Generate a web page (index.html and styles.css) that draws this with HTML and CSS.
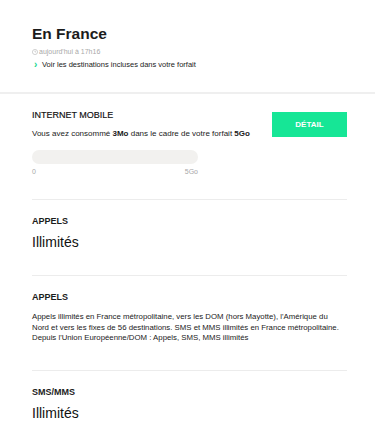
FILE: index.html
```html
<!DOCTYPE html>
<html lang="fr">
<head>
<meta charset="utf-8">
<title>En France</title>
<link rel="stylesheet" href="styles.css">
</head>
<body>
<header class="header">
  <h1 class="title">En France</h1>
  <div class="stamp">
    <svg class="clock" viewBox="0 0 10 10" width="6" height="6"><circle cx="5" cy="5" r="4.3" fill="none" stroke="#b5b5b5" stroke-width="1"/><path d="M5 2.6V5h1.8" fill="none" stroke="#b5b5b5" stroke-width="1"/></svg>
    <span>aujourd'hui à 17h16</span>
  </div>
  <a class="link" href="#"><span class="chev">›</span>Voir les destinations incluses dans votre forfait</a>
</header>

<section class="internet">
  <div class="internet-row">
    <div class="internet-info">
      <h2 class="label label-light">INTERNET MOBILE</h2>
      <p class="conso">Vous avez consommé <b>3Mo</b> dans le cadre de votre forfait <b>5Go</b></p>
    </div>
    <a class="btn" href="#">DÉTAIL</a>
  </div>
  <div class="bar"><div class="bar-fill" style="width:0%"></div></div>
  <div class="bar-labels"><span>0</span><span>5Go</span></div>
</section>

<div class="content">
  <section class="block">
    <h2 class="label">APPELS</h2>
    <p class="big">Illimités</p>
  </section>
  <section class="block block-text">
    <h2 class="label">APPELS</h2>
    <p class="desc">Appels illimités en France métropolitaine, vers les DOM (hors Mayotte), l'Amérique du<br>Nord et vers les fixes de 56 destinations. SMS et MMS illimités en France métropolitaine.<br>Depuis l'Union Européenne/DOM : Appels, SMS, MMS illimités</p>
  </section>
  <section class="block block-last">
    <h2 class="label">SMS/MMS</h2>
    <p class="big">Illimités</p>
  </section>
</div>
</body>
</html>
```

FILE: styles.css
```css
* { box-sizing: border-box; }
html, body { margin: 0; padding: 0; background: #fff; }
body {
  font-family: "Liberation Sans", Arial, sans-serif;
  color: #1a1a1a;
}
.header {
  padding: 24px 32px 22px;
  border-bottom: 2px solid #efefef;
}
.title {
  margin: 0;
  font-size: 15.5px;
  line-height: 20px;
  font-weight: 700;
  color: #1c1c1c;
}
.stamp {
  margin-top: 3px;
  display: flex;
  align-items: center;
  gap: 1px;
  font-size: 7px;
  line-height: 10px;
  color: #a9a9a9;
}
.clock { display: block; }
.link {
  margin-top: 1.5px;
  display: flex;
  align-items: center;
  font-size: 7.5px;
  line-height: 11px;
  color: #1a1a1a;
  text-decoration: none;
}
.chev {
  color: #16d68c;
  font-size: 10px;
  font-weight: 700;
  width: 10px;
  padding-left: 2px;
}
.internet {
  padding: 15px 28px 23px 32px;
}
.internet-row {
  display: flex;
  justify-content: space-between;
  align-items: flex-start;
}
.label {
  margin: 0;
  font-size: 9px;
  line-height: 12px;
  font-weight: 700;
  color: #1c1c1c;
}
.label-light { font-weight: 400; color: #0d0d0d; -webkit-text-stroke: 0.15px #0d0d0d; }
.conso {
  margin: 7.5px 0 0;
  font-size: 8px;
  line-height: 11px;
}
.conso b { font-weight: 700; }
.btn {
  margin-top: 3px;
  width: 75px;
  height: 25px;
  background: #16e696;
  color: #fff;
  font-size: 8px;
  font-weight: 700;
  display: flex;
  align-items: center;
  justify-content: center;
  text-decoration: none;
}
.bar {
  margin-top: 10.5px;
  width: 166px;
  height: 14px;
  border-radius: 7px;
  background: #f2f1ef;
  overflow: hidden;
}
.bar-fill { height: 100%; background: #16e696; }
.bar-labels {
  margin-top: 3.5px;
  width: 166px;
  display: flex;
  justify-content: space-between;
  font-size: 7px;
  line-height: 9px;
  color: #a8a8a8;
}
.content {
  padding: 0 28px 0 32px;
}
.block {
  border-top: 1px solid #ececec;
  padding: 15px 0 24px;
}
.big {
  margin: 6px 0 0;
  font-size: 14px;
  line-height: 18px;
  color: #111;
}
.desc {
  margin: 9px -8px 0 0;
  font-size: 7.8px;
  line-height: 10.7px;
  color: #1a1a1a;
  white-space: nowrap;
}
.block-text { padding-bottom: 26px; }
```
